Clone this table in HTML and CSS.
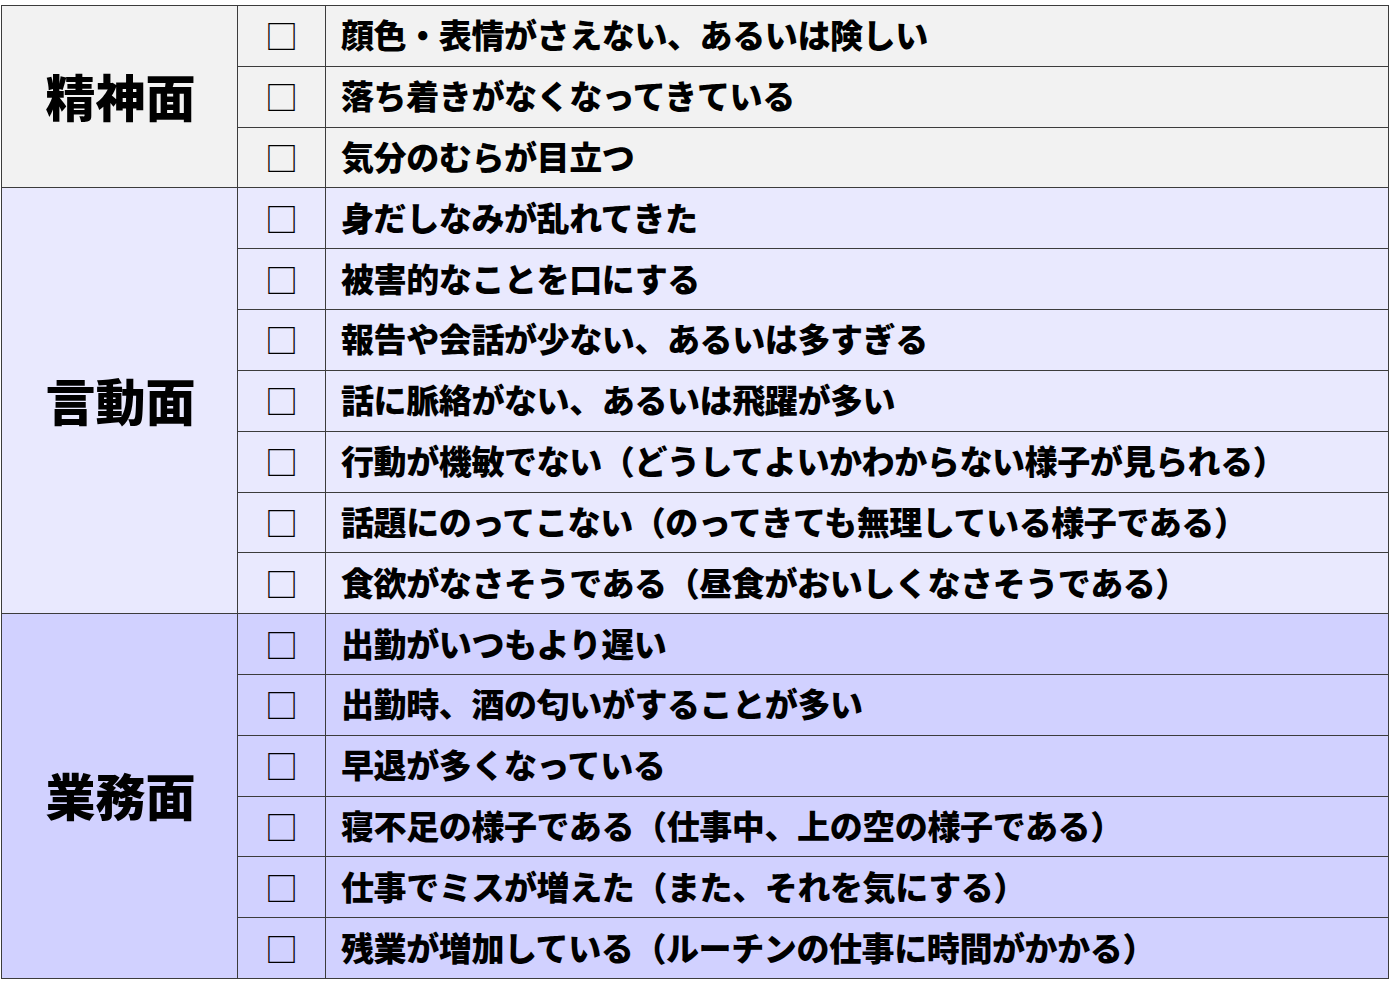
FILE: index.html
```html
<!DOCTYPE html>
<html lang="ja">
<head>
<meta charset="utf-8">
<link rel="stylesheet" href="styles.css">
</head>
<body>
<div class="sheet">
  <div class="cat cat-a" style="grid-row: 1 / span 3">精神面</div>
  <div class="box g-a">□</div><div class="item g-a">顔色・表情がさえない、あるいは険しい</div>
  <div class="box g-a">□</div><div class="item g-a">落ち着きがなくなってきている</div>
  <div class="box g-a">□</div><div class="item g-a">気分のむらが目立つ</div>

  <div class="cat cat-b" style="grid-row: 4 / span 7">言動面</div>
  <div class="box g-b">□</div><div class="item g-b">身だしなみが乱れてきた</div>
  <div class="box g-b">□</div><div class="item g-b">被害的なことを口にする</div>
  <div class="box g-b">□</div><div class="item g-b">報告や会話が少ない、あるいは多すぎる</div>
  <div class="box g-b">□</div><div class="item g-b">話に脈絡がない、あるいは飛躍が多い</div>
  <div class="box g-b">□</div><div class="item g-b">行動が機敏でない（どうしてよいかわからない様子が見られる）</div>
  <div class="box g-b">□</div><div class="item g-b">話題にのってこない（のってきても無理している様子である）</div>
  <div class="box g-b">□</div><div class="item g-b">食欲がなさそうである（昼食がおいしくなさそうである）</div>

  <div class="cat cat-c" style="grid-row: 11 / span 6">業務面</div>
  <div class="box g-c">□</div><div class="item g-c">出勤がいつもより遅い</div>
  <div class="box g-c">□</div><div class="item g-c">出勤時、酒の匂いがすることが多い</div>
  <div class="box g-c">□</div><div class="item g-c">早退が多くなっている</div>
  <div class="box g-c">□</div><div class="item g-c">寝不足の様子である（仕事中、上の空の様子である）</div>
  <div class="box g-c">□</div><div class="item g-c">仕事でミスが増えた（また、それを気にする）</div>
  <div class="box g-c">□</div><div class="item g-c">残業が増加している（ルーチンの仕事に時間がかかる）</div>
</div>
</body>
</html>
```
FILE: styles.css
```css
html, body {
  margin: 0;
  padding: 0;
  background: #ffffff;
}
body {
  padding: 5px 0 0 1px;
  font-family: "Noto Sans CJK JP", "Noto Sans", sans-serif;
  color: #000;
}
.sheet {
  display: grid;
  width: 1388px;
  height: 974px;
  box-sizing: border-box;
  padding: 1px;
  gap: 1px;
  background: #3c3c3c;
  grid-template-columns: 235px 87px 1fr;
  grid-template-rows: repeat(16, 1fr);
}
.cat {
  grid-column: 1;
  display: flex;
  align-items: center;
  justify-content: center;
  font-size: 50px;
  font-weight: 900;
  line-height: 1;
  padding-left: 2px;
  padding-bottom: 4px;
}
.cat-a, .g-a { background: #f2f2f2; }
.cat-b, .g-b { background: #e9e9fe; }
.cat-c, .g-c { background: #d1d1ff; }
.box {
  grid-column: 2;
  display: flex;
  align-items: center;
  justify-content: center;
  font-size: 33px;
  font-weight: 400;
  line-height: 1;
}
.item {
  grid-column: 3;
  display: flex;
  align-items: center;
  padding-left: 15px;
  padding-bottom: 2px;
  font-size: 33px;
  font-weight: 900;
  letter-spacing: -0.4px;
  white-space: nowrap;
  line-height: 1;
}
```
